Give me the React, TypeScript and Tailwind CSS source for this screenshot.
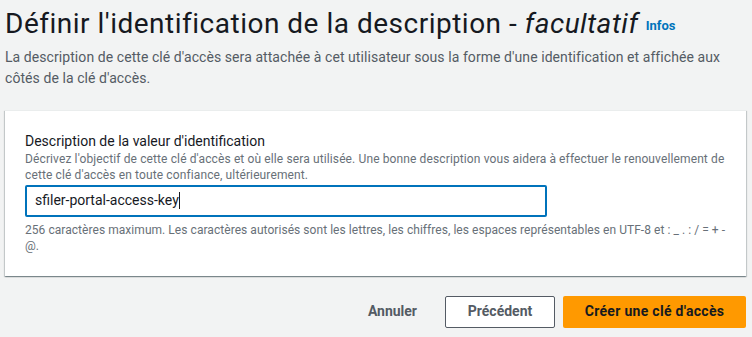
import React from 'react';

const font = { fontFamily: 'Roboto, "Liberation Sans", Arial, sans-serif' };

const App: React.FC = () => {
  return (
    <div className="min-h-screen bg-[#f2f3f3] pl-[5px] pr-[6px] text-[#16191f]" style={font}>
      {/* Header */}
      <div className="pt-[6px]">
        <h1 className="text-[28px] leading-[36px] font-normal tracking-[0.5px] text-[#16191f]">
          Définir l'identification de la description - <i>facultatif</i>{' '}
          <span className="text-[13px] font-bold tracking-normal text-[#0073bb] align-middle">Infos</span>
        </h1>
        <p className="mt-[3px] text-[14px] leading-[21px] tracking-[0.07px] text-[#545b64]">
          La description de cette clé d'accès sera attachée à cet utilisateur sous la forme d'une identification et affichée aux
          côtés de la clé d'accès.
        </p>
      </div>

      {/* Card */}
      <section className="mt-[21px] bg-white border-t border-[#eaeded] shadow-[0_1px_1px_0_rgba(0,28,36,0.3),1px_1px_1px_0_rgba(0,28,36,0.15),-1px_1px_1px_0_rgba(0,28,36,0.15)] px-[20px] pt-[20px] pb-[22px]">
        <label className="block text-[14px] leading-[20px] text-[#16191f]">
          Description de la valeur d'identification
        </label>
        <p className="text-[12px] leading-[16px] tracking-[0.12px] text-[#687078]">
          Décrivez l'objectif de cette clé d'accès et où elle sera utilisée. Une bonne description vous aidera à effectuer le renouvellement de
          cette clé d'accès en toute confiance, ultérieurement.
        </p>
        <div className="mt-[2px] w-[522px] h-[32px] border-2 border-[#0073bb] rounded-[2px] flex items-center px-[8px]">
          <span className="text-[14px] text-[#16191f]">sfiler-portal-access-key</span>
          <span className="w-px h-[17px] bg-[#16191f]" />
        </div>
        <p className="mt-[5px] text-[12px] leading-[16px] tracking-[0.05px] text-[#687078]">
          256 caractères maximum. Les caractères autorisés sont les lettres, les chiffres, les espaces représentables en UTF-8 et : _ . : / = + -
          @.
        </p>
      </section>

      {/* Actions */}
      <div className="mt-[20px] flex justify-end items-center gap-[8px]">
        <button className="h-[32px] px-[20px] text-[14px] font-bold text-[#545b64]">Annuler</button>
        <button className="h-[32px] w-[110px] border border-[#545b64] rounded-[2px] bg-white text-[14px] font-bold text-[#545b64]">
          Précédent
        </button>
        <button className="h-[32px] w-[183px] rounded-[2px] bg-[#ff9900] text-[14px] font-bold tracking-[0.3px] text-[#16191f]">
          Créer une clé d'accès
        </button>
      </div>
    </div>
  );
};

export default App;
